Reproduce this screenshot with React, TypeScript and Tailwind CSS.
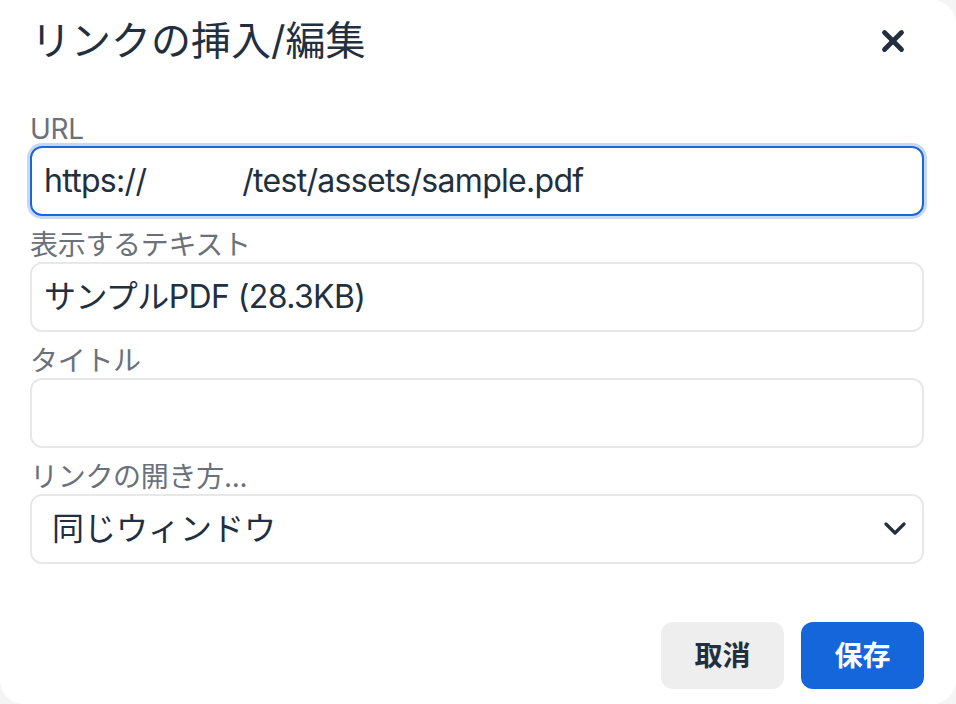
import { X } from 'lucide-react';

const font = { fontFamily: 'Inter, "Noto Sans CJK JP", sans-serif' };

const Field = ({ label, children }: { label: string; children: React.ReactNode }) => (
    <div className="flex flex-col">
        <label className="text-[28px] leading-[34px] tracking-[-0.3px] text-[#6a717b]">{label}</label>
        {children}
    </div>
);

export default function App() {
    return (
        <div className="min-h-[704px] w-[956px] bg-[#f4f4f4]" style={font}>
            <div className="flex h-[704px] w-[956px] flex-col rounded-tr-[24px] rounded-b-[24px] bg-white pl-[30px] pr-[32px]">
                {/* ヘッダー */}
                <div className="flex h-[50px] items-center justify-between mt-[16px]">
                    <h1 className="pl-[1px] text-[40px] leading-[50px] text-[#222f3e]">リンクの挿入/編集</h1>
                    <button className="mr-[14px] text-[#222f3e]">
                        <X size={34} strokeWidth={3.4} />
                    </button>
                </div>

                {/* フォーム */}
                <div className="mt-[46px] flex flex-col gap-[12px]">
                    <Field label="URL">
                        <div className="flex h-[70px] items-center rounded-[12px] border-2 border-[#1a66d9] px-[12px] text-[32px] tracking-[-0.7px] text-[#222f3e] ring-[3px] ring-[#c6d9f4]">
                            <span>https://</span>
                            <span className="inline-block w-[96px]" />
                            <span>/test/assets/sample.pdf</span>
                        </div>
                    </Field>
                    <Field label="表示するテキスト">
                        <div className="flex h-[70px] items-center rounded-[12px] border-2 border-[#e8e8e8] px-[12px] text-[32px] tracking-[-0.6px] text-[#222f3e]">
                            サンプルPDF (28.3KB)
                        </div>
                    </Field>
                    <Field label="タイトル">
                        <div className="h-[70px] rounded-[12px] border-2 border-[#e8e8e8]" />
                    </Field>
                    <Field label="リンクの開き方...">
                        <div className="flex h-[70px] items-center justify-between rounded-[12px] border-2 border-[#e8e8e8] pl-[20px] pr-[16px] text-[32px] text-[#222f3e]">
                            <span>同じウィンドウ</span>
                            <svg width="22" height="14" viewBox="0 0 22 14" fill="none">
                                <path d="M2 2l9 9 9-9" stroke="#222f3e" strokeWidth="3.2" strokeLinecap="round" strokeLinejoin="round" />
                            </svg>
                        </div>
                    </Field>
                </div>

                {/* フッター */}
                <div className="mt-auto mb-[15px] flex justify-end gap-[17px]">
                    <button className="h-[67px] w-[123px] rounded-[12px] bg-[#eeeeee] text-[28px] font-bold text-[#222f3e]">取消</button>
                    <button className="h-[67px] w-[123px] rounded-[12px] bg-[#1565db] text-[28px] font-bold text-white">保存</button>
                </div>
            </div>
        </div>
    );
}
